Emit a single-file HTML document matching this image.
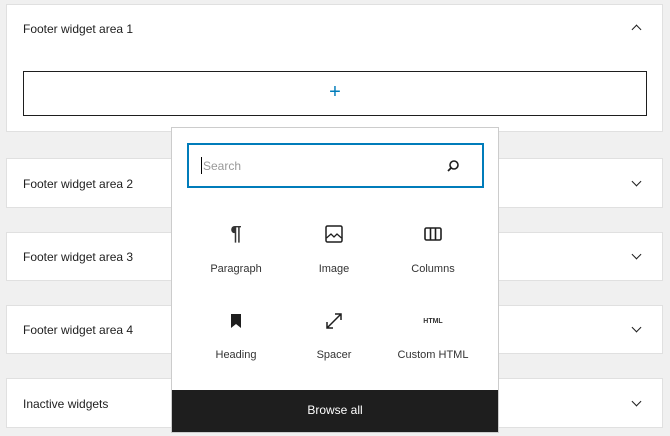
<!DOCTYPE html>
<html><head><style>
body{margin:0;width:670px;height:436px;background:#f0f0f0;font-family:"Liberation Sans",sans-serif;position:relative;overflow:hidden;color:#1e1e1e}
.p{position:absolute;left:6px;width:657px;background:#fff;border:1px solid #e0e0e0;box-sizing:border-box}
.t{position:absolute;left:16px;font-size:12px;color:#1e1e1e}
.ch{position:absolute;right:22px;width:6px;height:6px;border-right:1.5px solid #1e1e1e;border-bottom:1.5px solid #1e1e1e}
.pop{position:absolute;left:171px;top:127px;width:328px;height:306px;background:#fff;border:1px solid #ccc;box-sizing:border-box}
.it{position:absolute;width:100px;text-align:center;font-size:11px;color:#333}
.ic{position:absolute;left:0;width:100px;height:20px;display:flex;justify-content:center;align-items:center}
</style></head><body>
<div class="p" style="top:4px;height:128px">
<div class="t" style="top:17px">Footer widget area 1</div>
<div class="ch" style="top:21px;transform:rotate(-135deg)"></div>
<div style="position:absolute;left:16px;top:66px;width:624px;height:45px;border:1px solid #1e1e1e;box-sizing:border-box;text-align:center;color:#007cba;font-size:20px;line-height:40px;font-weight:300">+</div>
</div>
<div class="p" style="top:158px;height:50px"><div class="t" style="top:18px">Footer widget area 2</div><div class="ch" style="top:19px;transform:rotate(45deg)"></div></div>
<div class="p" style="top:232px;height:49px"><div class="t" style="top:17px">Footer widget area 3</div><div class="ch" style="top:18px;transform:rotate(45deg)"></div></div>
<div class="p" style="top:305px;height:49px"><div class="t" style="top:17px">Footer widget area 4</div><div class="ch" style="top:18px;transform:rotate(45deg)"></div></div>
<div class="p" style="top:378px;height:50px"><div class="t" style="top:18px">Inactive widgets</div><div class="ch" style="top:19px;transform:rotate(45deg)"></div></div>
<div class="pop">
<div style="position:absolute;left:15px;top:15px;width:297px;height:45px;border:2px solid #007cba;box-sizing:border-box">
<div style="position:absolute;left:14px;top:14px;font-size:12px;color:#999">Search</div>
<div style="position:absolute;left:12px;top:12px;width:1px;height:17px;background:#000"></div>
<svg style="position:absolute;left:256px;top:13px" width="16" height="16" viewBox="0 0 16 16"><circle cx="9" cy="7" r="4" fill="none" stroke="#1e1e1e" stroke-width="1.6"/><path d="M6 10L3 13" stroke="#1e1e1e" stroke-width="1.8"/></svg>
</div>
<div class="it" style="left:14px;top:96px"><div class="ic" style="top:0"><span style="font-size:20px;font-weight:bold">¶</span></div><div style="margin-top:39px">Paragraph</div></div>
<div class="it" style="left:112px;top:96px"><div class="ic"><svg width="18" height="18" viewBox="0 0 18 18"><rect x="1" y="1" width="16" height="16" rx="1.5" fill="none" stroke="#1e1e1e" stroke-width="1.5"/><path d="M1.5 13L6 9l3 3 3-3 4.5 4" fill="none" stroke="#1e1e1e" stroke-width="1.3"/></svg></div><div style="margin-top:39px">Image</div></div>
<div class="it" style="left:211px;top:96px"><div class="ic"><svg width="18" height="14" viewBox="0 0 18 14"><rect x="1" y="1" width="16" height="12" rx="1.5" fill="none" stroke="#1e1e1e" stroke-width="1.6"/><path d="M6.5 1v12M11.5 1v12" stroke="#1e1e1e" stroke-width="1.6"/></svg></div><div style="margin-top:39px">Columns</div></div>
<div class="it" style="left:14px;top:183px"><div class="ic"><svg width="12" height="14" viewBox="0 0 12 14"><path d="M1 0h10v14L6 10 1 14z" fill="#1e1e1e"/></svg></div><div style="margin-top:38px">Heading</div></div>
<div class="it" style="left:112px;top:183px"><div class="ic"><svg width="18" height="18" viewBox="0 0 18 18"><path d="M2 16L16 2M2 10v6h6M10 2h6v6" fill="none" stroke="#1e1e1e" stroke-width="1.5"/></svg></div><div style="margin-top:38px">Spacer</div></div>
<div class="it" style="left:211px;top:183px"><div class="ic"><span style="font-size:7px;font-weight:bold">HTML</span></div><div style="margin-top:38px">Custom HTML</div></div>
<div style="position:absolute;left:0;bottom:0;width:100%;height:42px;background:#1e1e1e;color:#fff;font-size:12px;text-align:center;line-height:40px">Browse all</div>
</div>
</body></html>
